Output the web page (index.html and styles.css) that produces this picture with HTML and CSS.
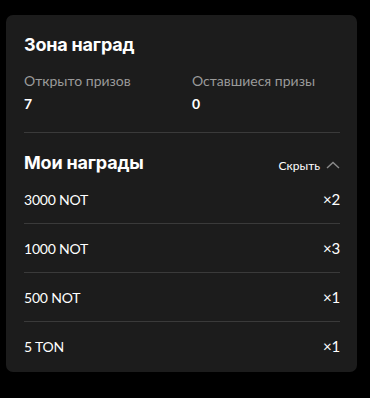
FILE: index.html
```html
<!DOCTYPE html>
<html lang="ru">
<head>
<meta charset="utf-8">
<link rel="stylesheet" href="styles.css">
</head>
<body>
<div class="card">
  <h2 class="title">Зона наград</h2>
  <div class="stats">
    <div class="stat">
      <div class="stat-label">Открыто призов</div>
      <div class="stat-value">7</div>
    </div>
    <div class="stat">
      <div class="stat-label">Оставшиеся призы</div>
      <div class="stat-value">0</div>
    </div>
  </div>
  <div class="divider"></div>
  <div class="section-head">
    <h2 class="title">Мои награды</h2>
    <button class="toggle">Скрыть
      <svg width="14" height="8" viewBox="0 0 14 8"><path d="M1 7 L7 1.5 L13 7" fill="none" stroke="#8a8a8a" stroke-width="1.4"/></svg>
    </button>
  </div>
  <ul class="rewards">
    <li class="reward"><span>3000 NOT</span><span class="qty">×2</span></li>
    <li class="reward"><span>1000 NOT</span><span class="qty">×3</span></li>
    <li class="reward"><span>500 NOT</span><span class="qty">×1</span></li>
    <li class="reward"><span>5 TON</span><span class="qty">×1</span></li>
  </ul>
</div>
</body>
</html>
```

FILE: styles.css
```css
html, body {
  margin: 0;
  background: #000;
}
body {
  padding: 15px 13px 0 6px;
  font-family: Lato, "Open Sans", sans-serif;
  color: #fff;
}
.card {
  background: #1c1c1c;
  border-radius: 7px;
  padding: 18px 17px 2px 18px;
}
.title {
  margin: 0;
  font-family: Inter, "Noto Sans", sans-serif;
  font-weight: 700;
  font-size: 18px;
  line-height: 24px;
  letter-spacing: -0.2px;
}
.stats {
  display: grid;
  grid-template-columns: 1fr 1fr;
  column-gap: 20px;
  margin-top: 14px;
}
.stat-label {
  font-size: 14px;
  line-height: 20px;
  color: #9a9a9a;
}
.stat-value {
  font-size: 14px;
  font-weight: 700;
  line-height: 20px;
  margin-top: 3px;
}
.divider {
  height: 1px;
  background: #3a3a3a;
  margin-top: 18px;
}
.section-head {
  display: flex;
  align-items: center;
  justify-content: space-between;
  margin-top: 18px;
}
.toggle {
  display: flex;
  align-items: center;
  gap: 6px;
  background: none;
  border: 0;
  padding: 0;
  color: #fff;
  font-family: Lato, sans-serif;
  font-size: 12px;
  margin-top: 4px;
}
.rewards {
  list-style: none;
  margin: 0;
  padding: 0;
}
.reward {
  display: flex;
  justify-content: space-between;
  align-items: center;
  height: 48px;
  font-size: 14px;
  letter-spacing: -0.2px;
  border-bottom: 1px solid #3a3a3a;
}
.reward:last-child {
  border-bottom: 0;
}
.qty {
  font-size: 15px;
  font-weight: 400;
}
```
